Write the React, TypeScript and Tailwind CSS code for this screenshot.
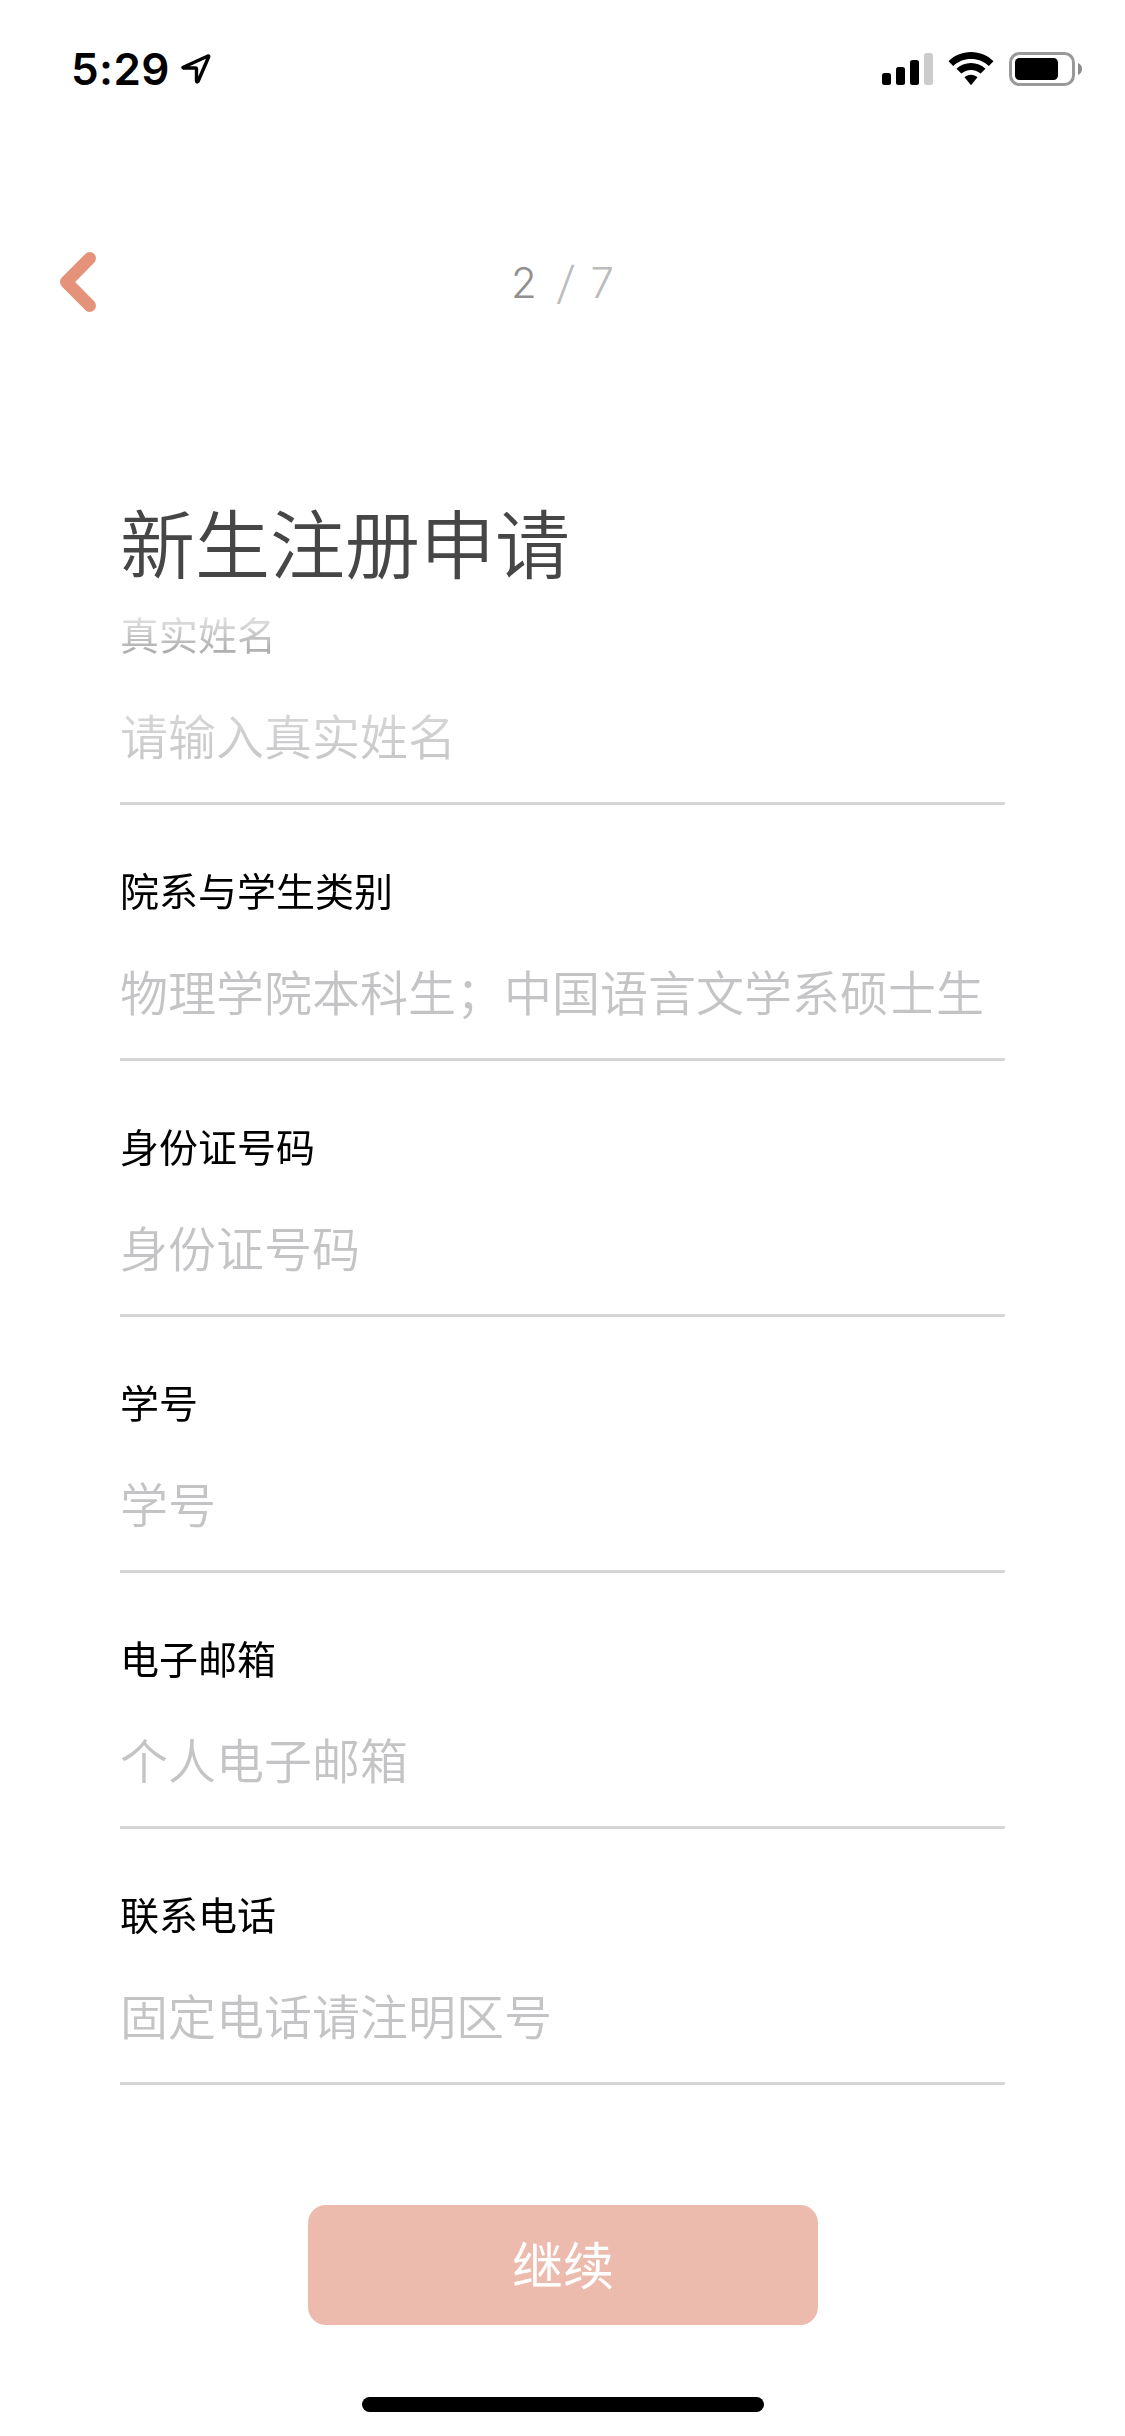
import { useState } from 'react';

type Field = {
  id: string;
  label: string;
  placeholder: string;
};

const FIELDS: Field[] = [
  { id: 'name', label: '真实姓名', placeholder: '请输入真实姓名' },
  { id: 'department', label: '院系与学生类别', placeholder: '物理学院本科生；中国语言文学系硕士生' },
  { id: 'id-number', label: '身份证号码', placeholder: '身份证号码' },
  { id: 'student-number', label: '学号', placeholder: '学号' },
  { id: 'email', label: '电子邮箱', placeholder: '个人电子邮箱' },
  { id: 'phone', label: '联系电话', placeholder: '固定电话请注明区号' },
];

function StatusBar() {
  return (
    <div className="flex h-[138px] items-center justify-between pl-[71px] pr-[43px]">
      <div className="flex items-center gap-[11px]">
        <span className="font-['Inter',sans-serif] text-[44px] font-semibold leading-none tracking-[0.4px] text-black">
          5:29
        </span>
        <svg width="30" height="30" viewBox="0 0 30 30" fill="none">
          <path
            d="M2.3 13.2 L27 2 Q28 1.8 27.6 3 L17 27.5 Q15.6 28.6 15.5 27 V15.2 Q15.5 14 14.3 14 H2.6 Q1.5 13.7 2.3 13.2 Z"
            stroke="#000"
            strokeWidth="3.4"
            strokeLinejoin="round"
          />
        </svg>
      </div>

      <div className="flex items-center">
        <svg width="51" height="34" viewBox="0 0 51 34">
          <rect x="0" y="21" width="9" height="12" rx="2.5" />
          <rect x="14" y="15" width="9" height="18" rx="2.5" />
          <rect x="28" y="8" width="9" height="25" rx="2.5" />
          <rect x="42" y="1" width="9" height="32" rx="2.5" fill="#ccc" />
        </svg>
        <svg className="ml-[15px]" width="46" height="34" viewBox="0 0 46 34">
          <path d="M23 0C14.200 0 6.200 3.500 .5 9.200L5.200 14C9.800 9.500 16 6.900 23 6.900S36.200 9.500 40.800 14L45.500 9.200C39.800 3.500 31.800 0 23 0Z" />
          <path d="M23 11C17.400 11 12.300 13.200 8.500 16.800L13.300 21.600C15.900 19.300 19.300 17.900 23 17.900S30.100 19.300 32.700 21.600L37.500 16.800C33.700 13.200 28.600 11 23 11Z" />
          <path d="M23 22.800C20.500 22.800 18.200 23.700 16.500 25.200L23 33.300L29.500 25.200C27.800 23.700 25.500 22.800 23 22.800Z" />
        </svg>
        <svg className="ml-[15px]" width="73" height="34" viewBox="0 0 73 34">
          <rect x="1.500" y="1.500" width="63" height="31" rx="9" fill="none" stroke="#999" strokeWidth="3" />
          <rect x="6" y="6" width="43" height="22" rx="4.500" />
          <path d="M69 11 C71.500 12 73 14.200 73 17 S71.500 22 69 23 Z" fill="#8c8c8c" />
        </svg>
      </div>
    </div>
  );
}

function StepHeader({ step, total }: { step: number; total: number }) {
  return (
    <div className="grid h-[288px] grid-cols-3 items-center px-[60px]">
      <button type="button" aria-label="返回" className="w-9">
        <svg width="36" height="60" viewBox="0 0 36 60" fill="none">
          <path
            d="M29.700 6.300 L6.300 30 L29.700 53.700"
            stroke="#e4927a"
            strokeWidth="12.500"
            strokeLinecap="round"
            strokeLinejoin="round"
          />
        </svg>
      </button>
      <div className="flex items-center justify-center pt-[2px] font-['Inter',sans-serif] text-[42px] font-[340] leading-none text-[#bcbcbc]">
        <span className="text-[#909090]">{step}</span>
        <span className="ml-[21px] mr-[17px] inline-block -skew-x-6 text-[45px] leading-[42px]">/</span>
        <span>{total}</span>
      </div>
    </div>
  );
}

export default function App() {
  const [values, setValues] = useState<Record<string, string>>({});

  const handleChange = (id: string, value: string) => {
    setValues({ ...values, [id]: value });
  };

  return (
    <div className="flex h-[2436px] w-[1125px] flex-col bg-white font-['Noto_Sans_CJK_SC',sans-serif]">
      <StatusBar />
      <StepHeader step={2} total={7} />

      <h1 className="mt-[62px] h-[109px] px-[120px] text-[75px] font-[350] leading-[106px] text-[#464646]">
        新生注册申请
      </h1>

      <form className="flex flex-col gap-[55px] px-[120px] pt-[7px] [mask-image:linear-gradient(to_bottom,transparent_0px,black_172px)]">
        {FIELDS.map((field) => (
          <div key={field.id} className="flex h-[201px] flex-col border-b-[3px] border-[#d6d6d6]">
            <label htmlFor={field.id} className="h-[58px] text-[39px] leading-[58px] text-black">
              {field.label}
            </label>
            <input
              id={field.id}
              type="text"
              className="mt-9 h-[72px] w-full bg-transparent text-[48px] font-[350] text-black outline-none placeholder:text-[#c4c4c6]"
              placeholder={field.placeholder}
              value={values[field.id] || ''}
              onChange={(e) => handleChange(field.id, e.target.value)}
            />
          </div>
        ))}
      </form>

      <button
        type="button"
        className="mx-auto mt-[120px] h-[120px] w-[510px] shrink-0 rounded-[18px] bg-[#edbbae] pb-1 pl-px text-[51px] leading-[116px] text-white"
      >
        继续
      </button>

      <div className="mx-auto mt-[72px] h-[15px] w-[402px] shrink-0 rounded-full bg-black" />
    </div>
  );
}
